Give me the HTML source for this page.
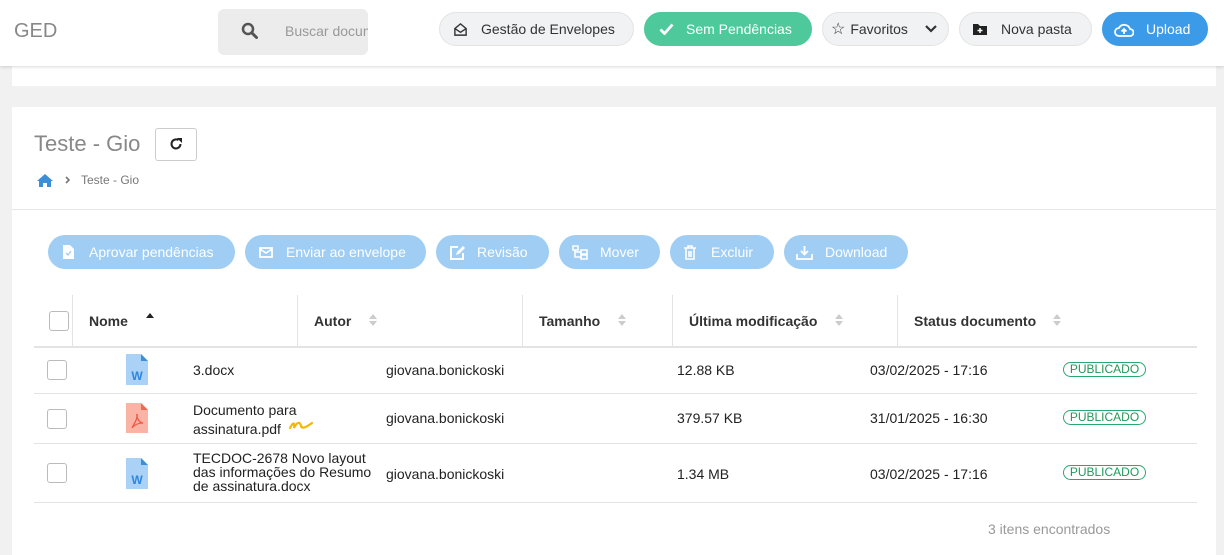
<!DOCTYPE html>
<html><head><meta charset="utf-8"><style>
*{box-sizing:border-box;margin:0;padding:0}
body{width:1224px;height:555px;overflow:hidden;background:#f1f1f1;font-family:"Liberation Sans",sans-serif;position:relative;color:#222}
.a{position:absolute}
.hdr{left:0;top:0;width:1224px;height:66px;background:#fff;box-shadow:0 1px 3px rgba(0,0,0,.15);z-index:2}
.pill{position:absolute;top:12px;height:34px;border-radius:17px;display:flex;align-items:center;font-size:14px;color:#333;background:#f1f2f3;border:1px solid #e3e3e3}
.card{background:#fff}
.btn{position:absolute;top:235px;height:34px;border-radius:17px;background:#9fcdf4;color:#fff;font-size:14px;display:flex;align-items:center}
.btn svg{flex:none}
.cb{position:absolute;width:20px;height:20px;border:1px solid #bbb;border-radius:3px;background:#fff}
.th{position:absolute;top:313px;font-size:14px;font-weight:bold;color:#333}
.srt{position:absolute;top:313px}
.vl{position:absolute;top:295px;height:52px;width:1px;background:#e3e3e3}
.hl{position:absolute;left:34px;width:1163px;height:1px;background:#e3e3e3}
.td{position:absolute;font-size:14px;color:#222}
.tag{position:absolute;left:1063px;width:83px;height:15px;border:1px solid #2aa86f;border-radius:8px;color:#1f9a5a;font-size:12px;line-height:13px;text-align:center}
</style></head><body>
<div class="a hdr">
 <div class="a" style="left:14px;top:20px;font-size:20px;color:#888">GED</div>
 <div class="a" style="left:218px;top:9px;width:150px;height:46px;background:#ececec;border-radius:6px;overflow:hidden">
  <svg class="a" style="left:23px;top:13px" width="17" height="17" viewBox="0 0 17 17"><circle cx="7" cy="7" r="5" fill="none" stroke="#555" stroke-width="2.5"/><path d="M11 11l4.5 4.5" stroke="#555" stroke-width="3" stroke-linecap="round"/></svg>
  <div class="a" style="left:67px;top:14px;font-size:14px;color:#999;white-space:nowrap">Buscar documentos</div>
 </div>
 <div class="pill" style="left:439px;width:195px"><svg style="margin-left:13px" width="15" height="15" viewBox="0 0 16 16"><path d="M2 7l6-5 6 5v7H2z M2 7l6 4 6-4" fill="none" stroke="#333" stroke-width="1.5"/></svg><span style="margin-left:13px">Gestão de Envelopes</span></div>
 <div class="pill" style="left:644px;width:168px;background:#4ec99b;border-color:#4ec99b;color:#fff"><svg style="margin-left:14px" width="15" height="12" viewBox="0 0 15 12"><path d="M1.5 6.5l4 4 8-9" fill="none" stroke="#fff" stroke-width="2.8"/></svg><span style="margin-left:12px">Sem Pendências</span></div>
 <div class="pill" style="left:822px;width:127px"><span style="margin-left:8px;font-size:16px">☆</span><span style="margin-left:5px">Favoritos</span><svg style="margin-left:17px" width="12" height="8" viewBox="0 0 12 8"><path d="M1 1l5 5 5-5" fill="none" stroke="#333" stroke-width="2.2"/></svg></div>
 <div class="pill" style="left:959px;width:133px"><svg style="margin-left:13px" width="14" height="12" viewBox="0 0 14 12"><path d="M0 1h5l2 2h7v9H0z" fill="#222"/><path d="M7 5v5M4.5 7.5h5" stroke="#fff" stroke-width="1.5"/></svg><span style="margin-left:14px">Nova pasta</span></div>
 <div class="pill" style="left:1102px;width:106px;background:#3b9be8;border-color:#3b9be8;color:#fff"><svg style="margin-left:11px" width="20" height="15" viewBox="0 0 20 15"><path d="M5 14a4 4 0 010-8 6 6 0 0111 1 3.5 3.5 0 010 7z" fill="none" stroke="#fff" stroke-width="1.8"/><path d="M10 12V7M7.5 9.5L10 7l2.5 2.5" fill="none" stroke="#fff" stroke-width="1.8"/></svg><span style="margin-left:12px">Upload</span></div>
</div>
<div class="a card" style="left:12px;top:66px;width:1204px;height:20px"></div>
<div class="a card" style="left:12px;top:107px;width:1204px;height:448px"></div>
<div class="a" style="left:34px;top:131px;font-size:22px;color:#888">Teste - Gio</div>
<div class="a" style="left:155px;top:128px;width:42px;height:33px;border:1px solid #ccc;border-radius:3px"></div>
<svg class="a" style="left:169px;top:137px" width="14" height="14" viewBox="0 0 14 14"><path d="M11.5 7A4.5 4.5 0 1 1 9.5 3.2" fill="none" stroke="#222" stroke-width="2"/><path d="M8 1h5v5z" fill="#222"/></svg>
<svg class="a" style="left:37px;top:173px" width="16" height="14" viewBox="0 0 16 14"><path d="M8 1L0 8h2v6h4v-4h4v4h4V8h2z" fill="#3b8fd9"/></svg>
<svg class="a" style="left:65px;top:176px" width="6" height="8" viewBox="0 0 6 8"><path d="M1 1l3 3-3 3" fill="none" stroke="#777" stroke-width="1.6"/></svg>
<div class="a" style="left:81px;top:173px;font-size:12px;color:#777">Teste - Gio</div>
<div class="a" style="left:12px;top:209px;width:1204px;height:1px;background:#e6e6e6"></div>
<div class="btn" style="left:48px;width:187px"><svg style="margin-left:15px" width="11" height="14" viewBox="0 0 11 14"><path d="M0 0h7l4 4v10H0z" fill="#fff"/><path d="M3 8l2 2 3-4" fill="none" stroke="#9fcdf4" stroke-width="1.3"/></svg><span style="margin-left:15px">Aprovar pendências</span></div>
<div class="btn" style="left:245px;width:181px"><svg style="margin-left:14px" width="14" height="11" viewBox="0 0 14 11"><rect x="1" y="1" width="12" height="9" fill="none" stroke="#fff" stroke-width="1.8"/><path d="M1 2l6 4 6-4" fill="none" stroke="#fff" stroke-width="1.6"/></svg><span style="margin-left:13px">Enviar ao envelope</span></div>
<div class="btn" style="left:436px;width:113px"><svg style="margin-left:14px" width="16" height="15" viewBox="0 0 16 15"><path d="M8 2H1v12h12V8" fill="none" stroke="#fff" stroke-width="2"/><path d="M6 10l1-3 6-6 2 2-6 6z" fill="#fff"/></svg><span style="margin-left:11px">Revisão</span></div>
<div class="btn" style="left:559px;width:101px"><svg style="margin-left:13px" width="16" height="15" viewBox="0 0 16 15"><path d="M1 1h5v4H1zM9 5h6v4H9zM9 10h6v4H9zM3 5v7h6M3 7h6" fill="none" stroke="#fff" stroke-width="1.6"/></svg><span style="margin-left:12px">Mover</span></div>
<div class="btn" style="left:670px;width:104px"><svg style="margin-left:14px" width="12" height="15" viewBox="0 0 12 15"><path d="M0 3h12M4 3V1h4v2M2 3v11h8V3M5 6v6M7 6v6" fill="none" stroke="#fff" stroke-width="1.6"/></svg><span style="margin-left:15px">Excluir</span></div>
<div class="btn" style="left:784px;width:124px"><svg style="margin-left:12px" width="17" height="15" viewBox="0 0 17 15"><path d="M8.5 1v8M5 6l3.5 3.5L12 6M1 9v5h15V9" fill="none" stroke="#fff" stroke-width="1.8"/></svg><span style="margin-left:12px">Download</span></div>

<div class="cb" style="left:49px;top:311px"></div>
<div class="vl" style="left:72px"></div><div class="vl" style="left:297px"></div><div class="vl" style="left:522px"></div><div class="vl" style="left:672px"></div><div class="vl" style="left:897px"></div>
<div class="th" style="left:89px">Nome</div>
<div class="a" style="left:146px;top:313px;width:0;height:0;border-left:4px solid transparent;border-right:4px solid transparent;border-bottom:5px solid #222"></div>
<div class="th" style="left:314px">Autor</div>
<div class="th" style="left:539px">Tamanho</div>
<div class="th" style="left:689px">Última modificação</div>
<div class="th" style="left:914px">Status documento</div>
<svg class="srt" style="left:368px" width="10" height="14" viewBox="0 0 10 14"><path d="M1 6l4-5 4 5zM1 8l4 5 4-5z" fill="#ccc"/></svg>
<svg class="srt" style="left:617px" width="10" height="14" viewBox="0 0 10 14"><path d="M1 6l4-5 4 5zM1 8l4 5 4-5z" fill="#ccc"/></svg>
<svg class="srt" style="left:834px" width="10" height="14" viewBox="0 0 10 14"><path d="M1 6l4-5 4 5zM1 8l4 5 4-5z" fill="#ccc"/></svg>
<svg class="srt" style="left:1052px" width="10" height="14" viewBox="0 0 10 14"><path d="M1 6l4-5 4 5zM1 8l4 5 4-5z" fill="#ccc"/></svg>
<div class="hl" style="top:346px;height:2px"></div>
<div class="hl" style="top:393px"></div>
<div class="hl" style="top:443px"></div>
<div class="hl" style="top:502px"></div>

<div class="cb" style="left:47px;top:360px"></div>
<svg class="a" style="left:126px;top:354px" width="22" height="31" viewBox="0 0 22 31"><path d="M0 0h15l7 7v24H0z" fill="#a9d2f6"/><path d="M15 0l7 7h-7z" fill="#3a8fdc"/><text x="11" y="26" font-family="Liberation Sans" font-weight="bold" font-size="12" fill="#2f86dc" text-anchor="middle">W</text></svg>
<div class="td" style="left:193px;top:362px">3.docx</div>
<div class="td" style="left:386px;top:362px">giovana.bonickoski</div>
<div class="td" style="left:677px;top:362px">12.88 KB</div>
<div class="td" style="left:870px;top:362px">03/02/2025 - 17:16</div>
<div class="tag" style="top:362px">PUBLICADO</div>

<div class="cb" style="left:47px;top:409px"></div>
<svg class="a" style="left:126px;top:403px" width="22" height="30" viewBox="0 0 22 30"><path d="M0 0h15l7 7v23H0z" fill="#fbb3a6"/><path d="M15 0l7 7h-7z" fill="#f06a52"/><path d="M6 25c3-6 6-10 5-14-1 4 3 9 6 9-4 0-8 1-11 5" fill="none" stroke="#ee5a44" stroke-width="1.3"/></svg>
<div class="td" style="left:193px;top:401px;line-height:19px">Documento para<br>assinatura.pdf</div>
<svg class="a" style="left:288px;top:419px" width="26" height="14" viewBox="0 0 26 14"><path d="M2 9c3-6 5-6 4 0 3-6 6-7 7-2 1 3 4 2 11-3" fill="none" stroke="#f5b800" stroke-width="2.2" stroke-linecap="round"/></svg>
<div class="td" style="left:386px;top:410px">giovana.bonickoski</div>
<div class="td" style="left:677px;top:410px">379.57 KB</div>
<div class="td" style="left:870px;top:410px">31/01/2025 - 16:30</div>
<div class="tag" style="top:410px">PUBLICADO</div>

<div class="cb" style="left:47px;top:463px"></div>
<svg class="a" style="left:126px;top:458px" width="22" height="31" viewBox="0 0 22 31"><path d="M0 0h15l7 7v24H0z" fill="#a9d2f6"/><path d="M15 0l7 7h-7z" fill="#3a8fdc"/><text x="11" y="26" font-family="Liberation Sans" font-weight="bold" font-size="12" fill="#2f86dc" text-anchor="middle">W</text></svg>
<div class="td" style="left:193px;top:451px;line-height:14px">TECDOC-2678 Novo layout<br>das informações do Resumo<br>de assinatura.docx</div>
<div class="td" style="left:386px;top:466px">giovana.bonickoski</div>
<div class="td" style="left:677px;top:466px">1.34 MB</div>
<div class="td" style="left:870px;top:466px">03/02/2025 - 17:16</div>
<div class="tag" style="top:465px">PUBLICADO</div>

<div class="a" style="left:988px;top:521px;font-size:14px;color:#999">3 itens encontrados</div>
</body></html>
